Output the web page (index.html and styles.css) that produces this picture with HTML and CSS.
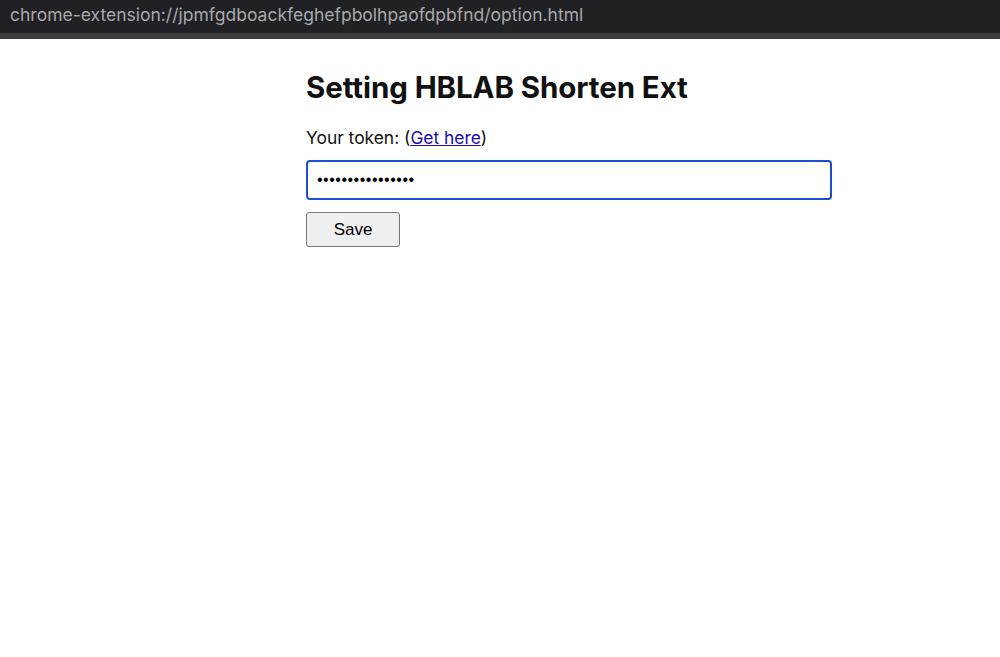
FILE: index.html
```html
<!DOCTYPE html>
<html lang="en">
<head>
    <meta charset="UTF-8">
    <meta name="viewport" content="width=device-width, initial-scale=1.0">
    <title>Setting HBLAB Shorten Ext</title>
    <link rel="stylesheet" href="styles.css">
</head>
<body>
    <div class="url-bar">chrome-extension://jpmfgdboackfeghefpbolhpaofdpbfnd/option.html</div>

    <div class="container">
        <h1>Setting HBLAB Shorten Ext</h1>
        <form id="option-form">
            <label for="token">Your token: (<a href="#">Get here</a>)</label>
            <input type="password" id="token" value="xxxxxxxxxxxxxxxx" autofocus>
            <button type="submit">Save</button>
        </form>
    </div>
</body>
</html>
```

FILE: styles.css
```css
body {
    font-family: Inter, "Liberation Sans", Arial, sans-serif;
    background-color: #fff;
    color: #111;
    margin: 0;
}
.url-bar {
    background-color: #202124;
    color: #a8a9ab;
    font-size: 17.5px;
    height: 33px;
    line-height: 30px;
    padding-left: 10px;
    border-bottom: 6px solid #3d3e41;
    white-space: nowrap;
}
.container {
    width: 526px;
    margin-left: 306px;
    padding-top: 30px;
}
h1 {
    font-size: 29.5px;
    font-weight: 700;
    margin: 0 0 22px;
    letter-spacing: -0.1px;
}
label {
    display: block;
    font-size: 17.4px;
    margin-bottom: 12px;
}
a {
    color: #1a0dab;
}
input[type="password"] {
    display: block;
    width: 100%;
    height: 40px;
    box-sizing: border-box;
    padding: 0 9px;
    border: 2px solid #1d4fd1;
    border-radius: 4px;
    font-family: "Liberation Sans", Arial, sans-serif;
    font-size: 16px;
    letter-spacing: 0.5px;
    outline: none;
    margin-bottom: 12px;
}
button {
    width: 94px;
    height: 35px;
    font-family: "Liberation Sans", Arial, sans-serif;
    font-size: 17px;
    background-color: #efefef;
    color: #000;
    border: 1px solid #767676;
    border-radius: 3px;
}
```
